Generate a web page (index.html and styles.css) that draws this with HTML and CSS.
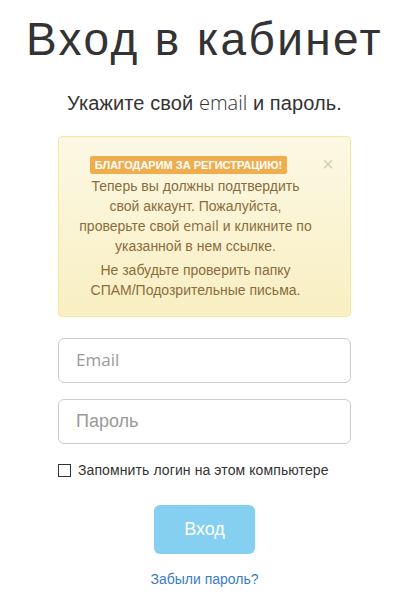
FILE: index.html
```html
<!DOCTYPE html>
<html lang="ru">
<head>
  <meta charset="UTF-8">
  <title>Вход в кабинет</title>
  <link rel="stylesheet" href="styles.css">
</head>
<body>

  <div class="page">
    <h1>Вход в кабинет</h1>
    <p class="lead">Укажите свой <span class="latin">email</span> и пароль.</p>

    <div class="notice">
      <span class="close">&times;</span>
      <div><span class="badge">Благодарим за регистрацию!</span></div>
      <p>Теперь вы должны подтвердить<br>свой аккаунт. Пожалуйста,<br>проверьте свой <span class="latin">email</span> и кликните по<br>указанной в нем ссылке.</p>
      <p>Не забудьте проверить папку<br>СПАМ/Подозрительные письма.</p>
    </div>

    <form class="login-form" onsubmit="return false">
      <input type="text" class="field latin-ph" placeholder="Email">
      <input type="password" class="field" placeholder="Пароль">
      <label class="remember">
        <span class="box"></span>
        Запомнить логин на этом компьютере
      </label>
      <div class="actions">
        <button type="submit" class="btn-login" disabled>Вход</button>
      </div>
      <a href="#" class="forgot">Забыли пароль?</a>
    </form>
  </div>

</body>
</html>
```

FILE: styles.css
```css
* {
  box-sizing: border-box;
}

body {
  margin: 0;
  background: #fff;
  color: #333;
  font-family: 'Liberation Sans', Arial, sans-serif;
}

.page {
  width: 293px;
  margin-left: 58px;
  text-align: center;
}

h1 {
  margin: 13px -50px 0;
  font-size: 46px;
  font-weight: normal;
  line-height: 52px;
  letter-spacing: 2.4px;
  color: #333;
}

.latin {
  font-family: 'Open Sans', sans-serif;
  font-weight: 300;
  letter-spacing: 0;
}

.lead {
  margin: 26px -20px 0;
  font-size: 20px;
  line-height: 24px;
  letter-spacing: 0.1px;
}

.notice {
  position: relative;
  margin-top: 21px;
  padding: 17px 28px 12px 10px;
  background: linear-gradient(to bottom, #fcf8e4, #f9efc2);
  border: 1px solid #f5e79e;
  border-radius: 4px;
  color: #8a6d3b;
  font-size: 14px;
  line-height: 20px;
}

.notice .latin {
  font-weight: normal;
}

.notice p {
  margin: 0 0 4px;
}

.close {
  position: absolute;
  top: 17px;
  right: 16px;
  font-size: 20px;
  line-height: 20px;
  color: #d9cfae;
}

.badge {
  display: inline-block;
  padding: 0 5px;
  margin: 0 14px 2px 0;
  background: #f0ad4e;
  color: #fff;
  font-size: 11px;
  font-weight: bold;
  line-height: 18px;
  text-transform: uppercase;
  border-radius: 2px;
}

.login-form {
  margin-top: 21px;
  display: flex;
  flex-direction: column;
  text-align: left;
}

.field {
  height: 45px;
  margin-bottom: 16px;
  padding: 0 17px;
  border: 1px solid #ccc;
  border-radius: 6px;
  font-family: 'Liberation Sans', Arial, sans-serif;
  font-size: 18px;
  color: #333;
}

.field::placeholder {
  color: #999;
}

.latin-ph::placeholder {
  font-family: 'Open Sans', sans-serif;
  font-size: 17px;
}

.remember {
  display: flex;
  align-items: center;
  gap: 7px;
  margin-top: 2px;
  font-size: 14px;
  letter-spacing: 0.1px;
  color: #333;
}

.remember .box {
  width: 13px;
  height: 13px;
  border: 1px solid #333;
}

.actions {
  margin-top: 27px;
  text-align: center;
}

.btn-login {
  width: 101px;
  height: 49px;
  border: 0;
  border-radius: 6px;
  background: #85cff0;
  color: #fff;
  font-family: 'Liberation Sans', Arial, sans-serif;
  font-size: 18px;
}

.forgot {
  margin-top: 17px;
  align-self: center;
  font-size: 14px;
  color: #3a7bc8;
  text-decoration: none;
}
```
